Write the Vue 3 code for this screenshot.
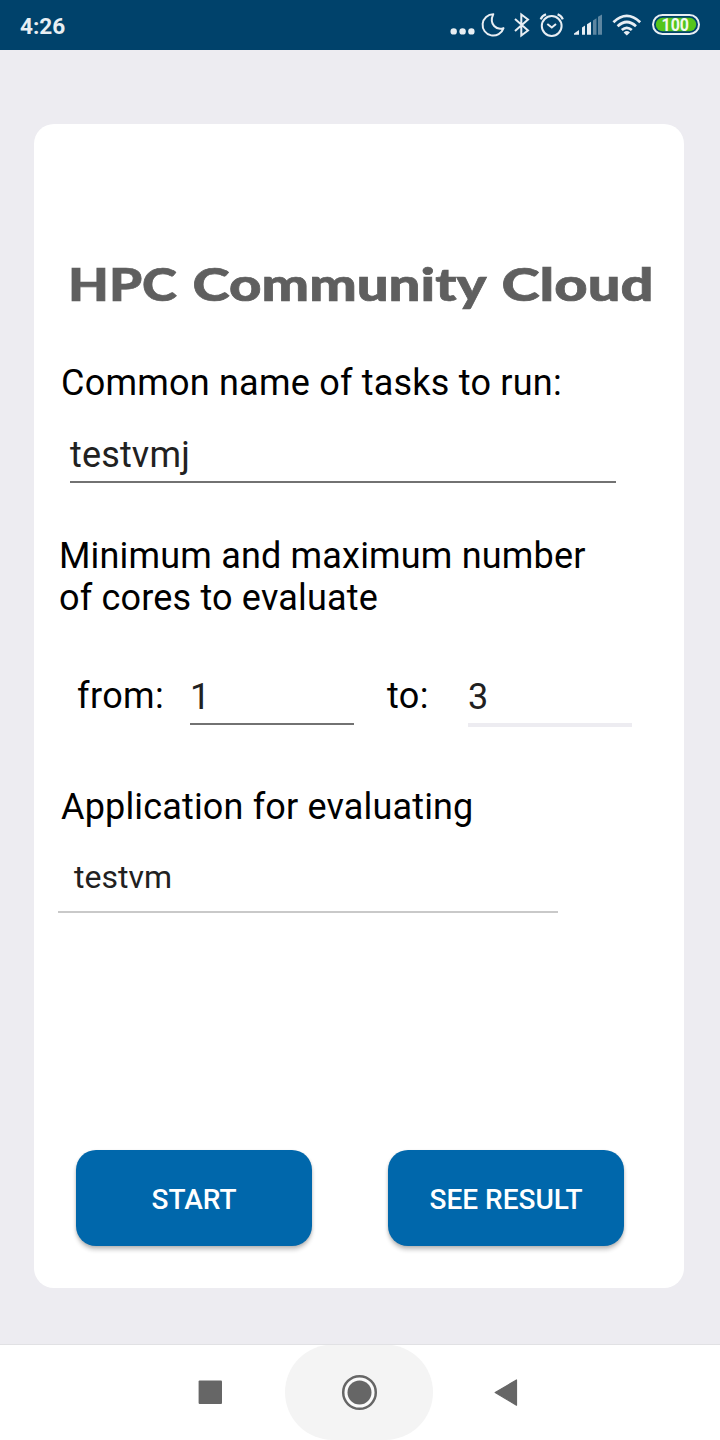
<script setup>
import { ref } from 'vue'

const taskName = ref('testvmj')
const minCores = ref('1')
const maxCores = ref('3')
const application = ref('testvm')
</script>

<template>
  <div class="screen">
    <header class="status">
      <span class="clock">4:26</span>
      <svg class="tray" width="280" height="50" viewBox="440 0 280 50" fill="none" stroke="#e8eef3">
        <g fill="#e8eef3" stroke="none">
          <circle cx="453.7" cy="31.4" r="3.2" />
          <circle cx="462.6" cy="31.4" r="3.2" />
          <circle cx="471.4" cy="31.4" r="3.2" />
        </g>
        <path d="M493.3 14.2A10.7 10.7 0 1 0 503.5 28.1C497 30.6 488.5 24.6 493.3 14.2Z" stroke-width="2" stroke-linejoin="round" />
        <path d="M515 19L528 30.5L521.3 35.6V14.4L528 19.5L515 31" stroke-width="2" />
        <circle cx="551.7" cy="26" r="9.9" stroke-width="2" />
        <path d="M547.3 24L551.8 27.5L556 24" stroke-width="2" />
        <path d="M540.7 19.3Q542 16 546 14.3M557.6 14.3Q561.5 16 562.8 19.3" stroke-width="2.2" />
        <g fill="#e8eef3" stroke="none">
          <path d="M574 34.7V33.5L579 30V34.7Z" />
          <path d="M582 27.5L585 25.5V34.7H582Z" />
          <path d="M587 24.2L591 21.8V34.7H587Z" />
          <path d="M593 20.5L596.5 18.2V34.7H593Z" opacity=".4" />
          <path d="M598 16.8L602 14.5V34.7H598Z" opacity=".4" />
        </g>
        <path d="M613.4 22.2Q626.8 9.6 640.2 22.2M617.6 26.2Q626.8 17.8 636 26.2M621.8 30Q626.8 25.6 631.8 30" stroke-width="2.7" />
        <path d="M623.6 32.4Q626.8 29.7 630 32.4L626.8 35.4Z" fill="#e8eef3" stroke="none" />
        <rect x="653" y="15" width="46" height="19" rx="9.5" stroke-width="2" />
        <rect x="655.8" y="17.8" width="40.4" height="13.4" rx="6.7" fill="#55c51b" stroke="none" />
        <text x="661.5" y="31" textLength="27.5" lengthAdjust="spacingAndGlyphs" class="charge">100</text>
      </svg>
    </header>

    <main class="card">
      <svg class="brand" width="650" height="70" viewBox="34 250 650 70">
        <text x="68" y="301" textLength="109" lengthAdjust="spacingAndGlyphs">HPC</text>
        <text x="192.5" y="301" textLength="294" lengthAdjust="spacingAndGlyphs">Community</text>
        <text x="501.5" y="301" textLength="152" lengthAdjust="spacingAndGlyphs">Cloud</text>
      </svg>
      <div class="label name-label">Common name of tasks to run:</div>
      <div class="field name-field">{{ taskName }}</div>
      <div class="label cores-label">Minimum and maximum number<br>of cores to evaluate</div>
      <div class="range">
        <span class="from">from:</span>
        <div class="field count">{{ minCores }}</div>
        <span class="to">to:</span>
        <div class="field count faint">{{ maxCores }}</div>
      </div>
      <div class="label app-label">Application for evaluating</div>
      <div class="select">{{ application }}</div>
      <div class="actions">
        <button>START</button>
        <button>SEE RESULT</button>
      </div>
    </main>

    <nav class="nav">
      <svg width="720" height="96" viewBox="0 1344 720 96">
        <rect x="285" y="1344.5" width="148" height="95.5" rx="47.7" fill="#f4f4f4" />
        <path d="M0 1344.5H720" stroke="#e1e1e4" />
        <rect x="198.6" y="1380.6" width="23.4" height="23.4" rx="1" fill="#666" />
        <circle cx="359.5" cy="1392.5" r="16.3" fill="#fafafa" stroke="#666" stroke-width="2.5" />
        <circle cx="359.5" cy="1392.5" r="12" fill="#666" />
        <path d="M495.2 1392.6L516.5 1380V1405.2Z" fill="#666" stroke="#666" stroke-width="1.2" stroke-linejoin="round" />
      </svg>
    </nav>
  </div>
</template>

<style>
body {
  margin: 0;
}
</style>

<style scoped>
.screen {
  width: 720px;
  height: 1440px;
  display: flex;
  flex-direction: column;
  overflow: hidden;
  background: #edecf1;
  font-family: Roboto, "Liberation Sans", sans-serif;
  font-size: 36px;
  line-height: 42px;
  color: #000;
}
.status {
  height: 50px;
  display: flex;
  align-items: center;
  justify-content: space-between;
  background: #00426b;
}
.clock {
  padding: 3px 0 0 20px;
  font-size: 22.6px;
  line-height: 28px;
  font-weight: 700;
  color: #e8eef3;
}
.charge {
  font-size: 18px;
  font-weight: 700;
  fill: #f3f8ef;
  stroke: none;
}
.card {
  box-sizing: border-box;
  width: 650px;
  height: 1164px;
  margin: 74px 0 0 34px;
  padding-top: 126px;
  border-radius: 20px;
  background: #fff;
}
.brand {
  display: block;
}
.brand text {
  font-family: Lato, sans-serif;
  font-size: 46.5px;
  font-weight: 900;
  fill: #5f5f5f;
  stroke: #5f5f5f;
  stroke-width: .7px;
}
.label {
  letter-spacing: .22px;
  white-space: nowrap;
}
.name-label {
  margin: 42px 0 0 27px;
}
.field {
  box-sizing: border-box;
  height: 49px;
  border-bottom: 2px solid #727272;
  color: #212121;
}
.name-field {
  width: 546px;
  margin: 30px 0 0 36px;
  letter-spacing: .15px;
}
.cores-label {
  margin: 52px 0 0 25px;
  letter-spacing: .18px;
}
.range {
  display: flex;
  margin: 56px 0 0 43px;
}
.from {
  width: 113px;
  letter-spacing: .4px;
}
.to {
  width: 81px;
  margin-left: 33px;
  letter-spacing: .4px;
}
.count {
  width: 164px;
  margin-top: 1px;
}
.faint {
  height: 51px;
  border-bottom: 4px solid #edecf1;
}
.app-label {
  margin: 59px 0 0 27px;
  letter-spacing: .16px;
}
.select {
  box-sizing: border-box;
  width: 500px;
  height: 55px;
  margin: 30px 0 0 24px;
  padding-left: 16px;
  border-bottom: 2px solid #c9c9c9;
  font-size: 32px;
  line-height: 38px;
  color: #212121;
}
.actions {
  display: flex;
  gap: 76px;
  margin: 237px 0 0 42px;
}
button {
  width: 236px;
  height: 96px;
  border: 0;
  border-radius: 20px;
  padding: 3px 0 0;
  background: #0067ab;
  box-shadow: 0 4px 4px rgba(0, 0, 0, .2), 0 1px 3px rgba(0, 0, 0, .14);
  color: #fff;
  font: 500 28px/34px Roboto, sans-serif;
}
.nav {
  height: 96px;
  margin-top: 56px;
  background: #fff;
}
.nav svg {
  display: block;
}
</style>
